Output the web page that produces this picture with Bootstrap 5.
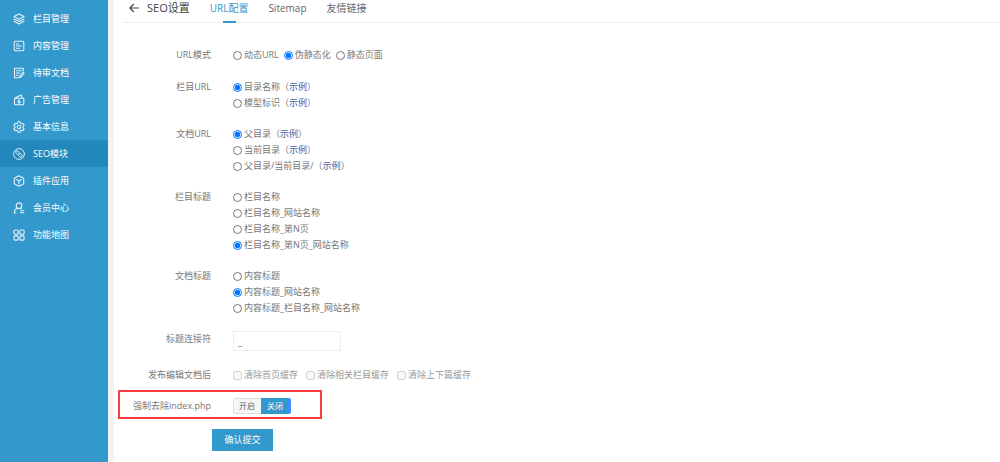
<!DOCTYPE html>
<html lang="zh-CN">
<head>
<meta charset="utf-8">
<meta name="viewport" content="width=device-width, initial-scale=1">
<title>SEO设置</title>
<link href="https://cdn.jsdelivr.net/npm/bootstrap@5.3.0/dist/css/bootstrap.min.css" rel="stylesheet">
<style>
  body { font-family: "Open Sans", "Noto Sans CJK SC", sans-serif; font-size: 9px; line-height: 16px; color: #777; background: #f3f3f3; }
  .side { width: 108px; background: #3398cc; padding-top: 5px; }
  .side .nav-link { height: 27px; padding: 0 0 0 13px; gap: 8px; color: #fff; }
  .side .nav-link.active { background: #2389bd; }
  .side svg { width: 12px; height: 12px; fill: none; stroke: #fff; stroke-width: 1.1; stroke-linejoin: round; stroke-linecap: round; opacity: .88; }
  .side .active svg { stroke-width: .9; }
  .main { margin-left: 6px; padding-left: 9px; background: #fff; }
  .topbar { height: 23px; border-bottom: 1px solid #eee; padding-left: 6px; font-size: 10px; color: #555; }
  .topbar h1 { font-size: 11px; line-height: 16px; margin: 0 20px 0 8px; font-weight: 400; color: #444; }
  .back { width: 10px; height: 16px; color: #444; }
  .tabs { gap: 20px; height: 23px; }
  .tabs a { position: relative; color: #666; text-decoration: none; height: 23px; }
  .tabs a.active { color: #3398cc; }
  .tabs a.active::after { content: ""; position: absolute; left: 50%; bottom: 0; width: 13px; height: 2px; margin-left: -6px; background: #3398cc; }
  form { padding-top: 24px; }
  .line { position: relative; display: flex; gap: 22px; margin-bottom: 15px; }
  .line:first-child { margin-bottom: 16px; }
  .name { width: 88px; flex: none; text-align: right; }
  .modes { gap: 5px; }
  .opt { display: flex; align-items: center; gap: 2px; height: 16px; }
  .opt input { width: 9px; height: 9px; margin: 0; flex: none; }
  .opt a { color: #4460a8; text-decoration: none; }
  .dim { color: #999; }
  .joiner { width: 108px; height: 20px; margin-bottom: 1px; padding: 2px 4px; border: 1px solid #eee; border-radius: 0; font-size: 9px; line-height: 16px; color: #555; }
  .switch .btn { height: 16px; padding: 0 5px; font-size: 8px; line-height: 14px; border-radius: 2px; border: 1px solid #ddd; background: #f6f6f6; color: #666; }
  .switch .btn:first-child { padding: 0 6px 0 5px; }
  .switch .btn.on { padding: 0 5px; background: #3398cc; border-color: #3398cc; border-right: 3px solid #3b8eff; color: #fff; }
  .marked::before { content: ""; position: absolute; left: -5px; top: -8px; width: 204px; height: 29px; border: 2px solid #f93b3b; pointer-events: none; }
  .submit { margin-left: 89px; width: 61px; height: 22px; padding: 0; border: 0; border-radius: 0; background: #3398cc; color: #fff; font-size: 9px; line-height: 22px; }
</style>
<script src="https://cdn.jsdelivr.net/npm/bootstrap@5.3.0/dist/js/bootstrap.bundle.min.js"></script>
</head>
<body>
<div class="d-flex min-vh-100">
  <nav class="side flex-shrink-0">
    <ul class="nav flex-column">
      <li class="nav-item"><a class="nav-link d-flex align-items-center" href="#"><svg viewBox="0 0 12 12"><path d="M6 1 11 3.5 6 6.2 1 3.5ZM1 6l5 2.6L11 6M1 8.3 6 11l5-2.7"/></svg>栏目管理</a></li>
      <li class="nav-item"><a class="nav-link d-flex align-items-center" href="#"><svg viewBox="0 0 12 12"><rect x="1.2" y="1.2" width="9.6" height="9.6" rx="1"/><path d="M3.5 4h2M3.5 6h5M3.5 8.3h3"/></svg>内容管理</a></li>
      <li class="nav-item"><a class="nav-link d-flex align-items-center" href="#"><svg viewBox="0 0 12 12"><path d="M10.3 4V1.2H1.5v9.6h4M3.5 3.7h5M3.5 6h3.2M3.5 8.2h1.7M6.5 10.8l.4-2L10 5.3l1.2 1.1-3.1 3.6Z"/></svg>待审文档</a></li>
      <li class="nav-item"><a class="nav-link d-flex align-items-center" href="#"><svg viewBox="0 0 12 12"><path d="M1.5 4.3h9.3v5.5q0 1-1 1H2.5q-1 0-1-1ZM1.5 4.3 8 .9l1.4 3.2M6.5 5.8 4.7 7.7h2.8L5.7 9.5"/></svg>广告管理</a></li>
      <li class="nav-item"><a class="nav-link d-flex align-items-center" href="#"><svg viewBox="0 0 12 12"><path d="m4.8 1 .3-.3h1.8l.5 1.5 1.2.6 1.5-.3 1 1.6L10 5.3v1.4l1.1 1.2-1 1.6-1.5-.3-1.2.6-.5 1.5H5.1l-.5-1.5-1.2-.6-1.5.3-1-1.6L2 6.7V5.3L.9 4.1l1-1.6 1.5.3 1.2-.6Z"/><circle cx="6" cy="6" r="1.7"/></svg>基本信息</a></li>
      <li class="nav-item"><a class="nav-link active d-flex align-items-center" href="#"><svg viewBox="0 0 12 12"><circle cx="6" cy="6" r="5.4"/><path d="M6.2 4.3 5 3.1a1.3 1.3 0 0 0-1.9 1.9l1.6 1.6a1.3 1.3 0 0 0 1.8 0M5.8 7.7 7 8.9A1.3 1.3 0 0 0 8.9 7L7.3 5.4a1.3 1.3 0 0 0-1.8 0"/></svg>SEO模块</a></li>
      <li class="nav-item"><a class="nav-link d-flex align-items-center" href="#"><svg viewBox="0 0 12 12"><path d="M6 .8 10.7 3.3v5.4L6 11.2 1.3 8.7V3.3ZM3.5 4.6 6 6l2.5-1.4M6 6v2.8"/></svg>插件应用</a></li>
      <li class="nav-item"><a class="nav-link d-flex align-items-center" href="#"><svg viewBox="0 0 12 12"><circle cx="6" cy="3.7" r="2.8"/><path d="M4.4 6.2Q1.3 7.4 1.3 11h1.5M7.4 6.2l1 .9M7.5 8.7h3.3M7.5 10.8h3.3"/></svg>会员中心</a></li>
      <li class="nav-item"><a class="nav-link d-flex align-items-center" href="#"><svg viewBox="0 0 12 12"><rect x="1" y="1" width="4.2" height="4.2" rx="1"/><rect x="6.9" y="1" width="4.2" height="4.2" rx="1"/><rect x="1" y="6.9" width="4.2" height="4.2" rx="1"/><rect x="6.9" y="6.9" width="4.2" height="4.2" rx="1"/></svg>功能地图</a></li>
    </ul>
  </nav>
  <main class="main flex-grow-1">
    <header class="topbar d-flex align-items-start">
      <a class="back d-flex align-items-center" href="#" aria-label="返回"><svg width="10" height="10" viewBox="0 0 10 10" fill="none" stroke="currentColor" stroke-width="1.1"><path d="M10 5H.8M4.8 1 .8 5l4 4"/></svg></a>
      <h1>SEO设置</h1>
      <nav class="tabs d-flex">
        <a class="active" href="#">URL配置</a><a href="#">Sitemap</a><a href="#">友情链接</a>
      </nav>
    </header>
    <form>
      <div class="line" role="group" aria-labelledby="n1">
        <span class="name" id="n1">URL模式</span>
        <div class="d-flex modes">
          <label class="opt"><input type="radio" name="mode">动态URL</label>
          <label class="opt"><input type="radio" name="mode" checked>伪静态化</label>
          <label class="opt"><input type="radio" name="mode">静态页面</label>
        </div>
      </div>
      <div class="line" role="group" aria-labelledby="n2">
        <span class="name" id="n2">栏目URL</span>
        <div>
          <label class="opt"><input type="radio" name="col" checked><span>目录名称（<a href="#">示例</a>）</span></label>
          <label class="opt"><input type="radio" name="col"><span>模型标识（<a href="#">示例</a>）</span></label>
        </div>
      </div>
      <div class="line" role="group" aria-labelledby="n3">
        <span class="name" id="n3">文档URL</span>
        <div>
          <label class="opt"><input type="radio" name="doc" checked><span>父目录（<a href="#">示例</a>）</span></label>
          <label class="opt"><input type="radio" name="doc"><span>当前目录（<a href="#">示例</a>）</span></label>
          <label class="opt"><input type="radio" name="doc"><span>父目录/当前目录/（<a href="#">示例</a>）</span></label>
        </div>
      </div>
      <div class="line" role="group" aria-labelledby="n4">
        <span class="name" id="n4">栏目标题</span>
        <div>
          <label class="opt"><input type="radio" name="ct">栏目名称</label>
          <label class="opt"><input type="radio" name="ct">栏目名称_网站名称</label>
          <label class="opt"><input type="radio" name="ct">栏目名称_第N页</label>
          <label class="opt"><input type="radio" name="ct" checked>栏目名称_第N页_网站名称</label>
        </div>
      </div>
      <div class="line" role="group" aria-labelledby="n5">
        <span class="name" id="n5">文档标题</span>
        <div>
          <label class="opt"><input type="radio" name="dt">内容标题</label>
          <label class="opt"><input type="radio" name="dt" checked>内容标题_网站名称</label>
          <label class="opt"><input type="radio" name="dt">内容标题_栏目名称_网站名称</label>
        </div>
      </div>
      <div class="line">
        <label class="name" for="joiner">标题连接符</label>
        <input class="form-control joiner" id="joiner" type="text" value="_">
      </div>
      <div class="line" role="group" aria-labelledby="n7">
        <span class="name" id="n7">发布编辑文档后</span>
        <div class="d-flex gap-2 dim">
          <label class="opt"><input type="checkbox" disabled>清除首页缓存</label>
          <label class="opt"><input type="checkbox" disabled>清除相关栏目缓存</label>
          <label class="opt"><input type="checkbox" disabled>清除上下篇缓存</label>
        </div>
      </div>
      <div class="line marked" role="group" aria-labelledby="n8">
        <span class="name" id="n8">强制去除index.php</span>
        <div class="btn-group switch">
          <button class="btn" type="button">开启</button>
          <button class="btn on" type="button" aria-pressed="true">关闭</button>
        </div>
      </div>
      <button class="btn submit" type="submit">确认提交</button>
    </form>
  </main>
</div>
</body>
</html>
